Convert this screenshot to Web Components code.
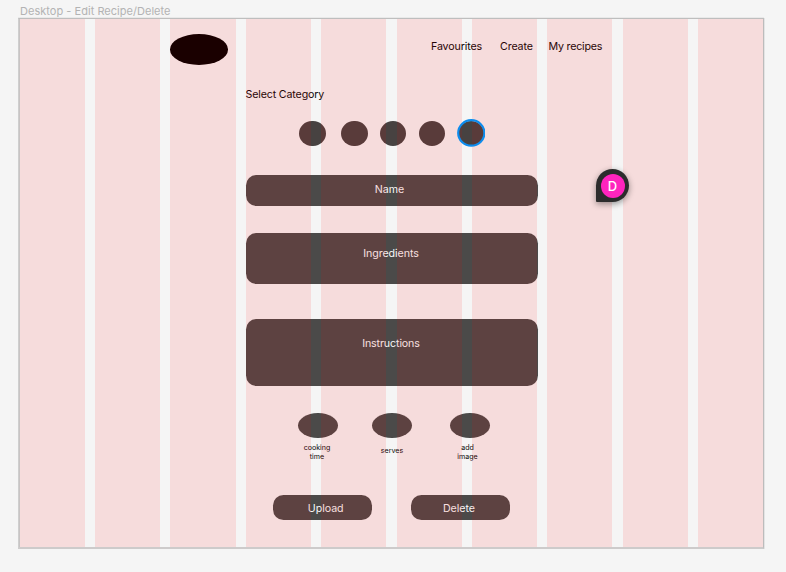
<!DOCTYPE html>
<html lang="en">
<head>
<meta charset="utf-8">
<title>Edit Recipe/Delete</title>
<style>
html,body{margin:0;width:786px;height:572px;overflow:hidden;background:#f5f5f5;font-family:Inter,"Liberation Sans",sans-serif}
</style>
</head>
<body>
<design-canvas></design-canvas>
<script>
class Base extends HTMLElement {
  constructor() {
    super();
    this.attachShadow({mode: 'open'}).innerHTML =
      '<style>*{box-sizing:border-box}' + this.constructor.css + '</style>' + this.constructor.html;
  }
}
const define = (name, css, html) =>
  customElements.define(name, class extends Base { static css = css; static html = html; });

define('dot-shape', `
:host{display:block;width:var(--w,26.6px);height:var(--h,25.8px);border-radius:50%;background:var(--fill,#474241)}
`, '');

define('category-picker', `
:host{display:flex;height:26px;padding-left:280.3px}
dot-shape{flex:none}
.a{margin-right:15.1px}.b{margin-right:12.3px}
`, `<dot-shape class="a"></dot-shape><dot-shape class="b"></dot-shape><dot-shape class="b"></dot-shape><dot-shape class="b"></dot-shape><dot-shape></dot-shape>`);

define('form-field', `
:host{display:block;box-sizing:border-box;width:292px;margin-left:227px;border-radius:10.5px;background:#4b4a49;color:#f8f8f8;
font-size:10.67px;line-height:13px;text-align:center;letter-spacing:-.06px;padding-right:var(--shift,2px)}
`, `<slot></slot>`);

define('round-option', `
:host{display:flex;flex-direction:column;align-items:center;width:40px;font-size:7.1px;line-height:8.6px;text-align:center;color:#0c0808}
dot-shape{--w:39.5px;--h:25px;--fill:#4b4a49;flex:none}
.t{height:22px;margin-top:4px;display:flex;align-items:center;width:40px;justify-content:center;transform:translate(var(--tx,0),var(--ty,0))}
`, `<dot-shape></dot-shape><div class="t"><span><slot></slot></span></div>`);

define('pill-button', `
:host{display:block;width:99px;height:25px;border-radius:10.5px;background:#4b4a49;color:#f8f8f8;font-size:10.67px;line-height:27px;text-align:center;box-sizing:border-box;letter-spacing:-.05px;padding-left:var(--pl,0);padding-right:var(--pr,0)}
`, `<slot></slot>`);

define('site-header', `
:host{display:flex;height:64px;font-size:10.67px;line-height:13px;color:#0c0808}
dot-shape{--w:58px;--h:30.5px;--fill:#000;margin:15.3px 0 0 151px;flex:none}
nav{display:flex;margin:21px 0 0 203px}
span{white-space:nowrap;letter-spacing:-.12px;flex:none}
.f{width:69px}.c{width:48.5px}
.m{letter-spacing:-.2px}
`, `<dot-shape></dot-shape><nav><span class="f">Favourites</span><span class="c">Create</span><span class="m">My recipes</span></nav>`);

define('column-grid', `
:host{position:absolute;left:1px;top:0;bottom:0;width:743px;pointer-events:none;display:grid;grid-template-columns:65px 10px 65px 10px 66px 10px 65px 10px 65px 11px 65px 10px 65px 10px 65px 11px 65px 10px 65px}
i{background:rgba(255,0,0,.1)}
`, Array.from({length: 19}, (_, n) => n % 2 ? '<b></b>' : '<i></i>').join(''));

define('user-pin', `
:host{position:absolute;left:596px;top:169px;width:33px;height:33px;border-radius:50% 50% 50% 1px;background:#2c2c2c;box-shadow:0 2px 6px rgba(0,0,0,.4);display:grid;place-items:center}
span{width:24px;height:24px;border-radius:50%;background:#ff24bd;color:#fff;font-size:13px;line-height:25px;text-align:center;font-weight:500}
`, `<span><slot></slot></span>`);

define('selection-ring', `
:host{position:absolute;left:456.6px;top:119.3px;width:28.6px;height:27.9px}
svg{display:block;width:100%;height:100%}
`, `<svg viewBox="0 0 28.6 27.9"><ellipse cx="14.3" cy="13.95" rx="13.1" ry="12.75" fill="none" stroke="#0d8ced" stroke-width="2.2"/></svg>`);

define('recipe-frame', `
:host{display:block;box-sizing:border-box;position:relative;width:746px;height:531px;margin-left:18px;border:1px solid;border-color:#bebebe #bcbcbc #cdcbcb #cfcfcf;border-bottom-width:2px;box-shadow:inset 1px 0 #c8c4c4,0 -1px #e9e9e9,1px 0 #e4e4e4}
h2{margin:5px 0 0 226.5px;font-size:10.67px;line-height:13px;font-weight:400;color:#0c0808;letter-spacing:-.15px}
category-picker{margin-top:19.6px}
.name{height:31.6px;margin-top:28.1px;padding-top:8.6px}
.ing{height:51.4px;margin-top:26.4px;padding-top:14px}
.ins{height:67.3px;margin-top:34.6px;padding-top:18.3px;letter-spacing:-.12px}
.opts{display:flex;margin:26.7px 0 0 279px}
.btns{display:flex;gap:39.3px;margin:31.4px 0 0 254.2px}
`, `<site-header></site-header>
<h2>Select Category</h2>
<category-picker></category-picker>
<form-field class="name" style="--shift:5px">Name</form-field>
<form-field class="ing">Ingredients</form-field>
<form-field class="ins">Instructions</form-field>
<div class="opts"><round-option style="--tx:-1px">cooking<br>time</round-option><round-option style="margin-left:34px;--ty:-1.5px">serves</round-option><round-option style="margin-left:38px;--tx:-2.5px">add<br>image</round-option></div>
<div class="btns"><pill-button style="--pl:6px">Upload</pill-button><pill-button style="--pr:4px">Delete</pill-button></div>
<column-grid></column-grid>`);

define('design-canvas', `
:host{display:block;position:relative;width:786px;height:572px;background:#f5f5f5}
.title{height:18px;padding:5px 0 0 20px;font-size:11px;line-height:13px;color:#b3b3b3;white-space:nowrap;letter-spacing:.03px}
`, `<div class="title">Desktop - Edit Recipe/Delete</div>
<recipe-frame></recipe-frame>
<selection-ring></selection-ring>
<user-pin>D</user-pin>`);
</script>
</body>
</html>
